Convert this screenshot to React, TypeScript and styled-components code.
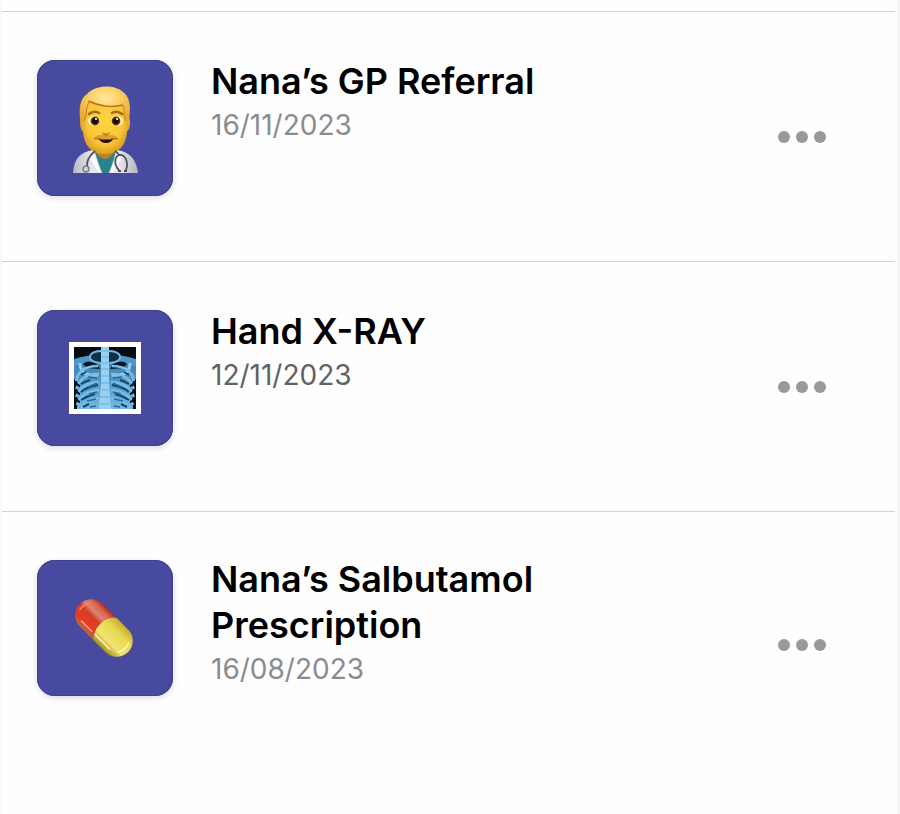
import React from 'react';
import styled, { createGlobalStyle } from 'styled-components';

const GlobalStyle = createGlobalStyle`
  * { box-sizing: border-box; }
  body { margin: 0; background: #fff; font-family: Inter, Roboto, sans-serif; color: #000; }
`;

const Page = styled.main`
  min-height: 100vh;
  padding-top: 11px;
  border-left: 2px solid #f8f8f8;
  border-right: 3px solid #f5f5f5;
  background: #fefefe;
`;

const List = styled.ul`
  list-style: none;
  margin: 0 2px 0 0;
  padding: 0;
`;

const Row = styled.li<{ $tall?: boolean }>`
  display: flex;
  align-items: flex-start;
  min-height: ${(p) => (p.$tall ? 266 : 250)}px;
  padding: 48px 69px 48px 35px;
  border-top: 1px solid #d3d3d3;
`;

const Tile = styled.div`
  flex: none;
  display: grid;
  place-items: center;
  width: 136px;
  height: 136px;
  border-radius: 18px;
  background: #484a9f;
  box-shadow: 0 2px 6px rgba(0, 0, 0, 0.14), inset 0 0 0 1px #3f4090;
`;

const Details = styled.div<{ $raised?: boolean }>`
  flex: 1;
  min-width: 0;
  max-width: 390px;
  padding-left: 38px;
  margin-top: ${(p) => (p.$raised ? -4 : -2)}px;
`;

const Title = styled.h2`
  margin: 0;
  font-size: 36px;
  line-height: 46px;
  font-weight: 600;
`;

const DateText = styled.time<{ $dark?: boolean }>`
  display: block;
  font-size: 28px;
  line-height: 42px;
  color: ${(p) => (p.$dark ? '#626264' : '#8c8c90')};
`;

const MoreButton = styled.button`
  align-self: center;
  display: flex;
  gap: 6px;
  margin-left: auto;
  padding: 0;
  border: 0;
  background: none;
  cursor: pointer;
`;

const Dot = styled.span`
  width: 12px;
  height: 12px;
  border-radius: 50%;
  background: #999;
`;

function DoctorIcon() {
  return (
    <svg width="72" height="90" viewBox="0 0 72 90" aria-hidden="true">
      <defs>
        <radialGradient id="face" cx=".5" cy=".42" r=".64">
          <stop offset="0" stopColor="#fed53f" />
          <stop offset=".65" stopColor="#f8c636" />
          <stop offset="1" stopColor="#cf9320" />
        </radialGradient>
        <radialGradient id="hair" cx=".5" cy=".3" r=".6">
          <stop offset="0" stopColor="#ffe9a0" />
          <stop offset=".45" stopColor="#fdd36a" />
          <stop offset="1" stopColor="#e9ab35" />
        </radialGradient>
        <linearGradient id="coat" x1="0" x2="1">
          <stop offset="0" stopColor="#b9bac2" />
          <stop offset=".3" stopColor="#e9e9ed" />
          <stop offset=".7" stopColor="#e9e9ed" />
          <stop offset="1" stopColor="#b3b4bd" />
        </linearGradient>
      </defs>
      <path d="M4 90C5 76 11 69 24 67h24c13 2 19 9 21 23Z" fill="url(#coat)" />
      <path d="M26 67h21l2 8-7 15H31l-6-16Z" fill="#28828f" />
      <path d="M27 63v6c2 4 6 7 9 7s7-3 9-7v-6Z" fill="#bd8220" />
      <path d="M25 67c2 6 4 13 8 23h-4l-9-15Zm22 0c-1 7-3 13-7 23h5l8-14Z" fill="#fafafc" stroke="#cbcbd2" strokeWidth=".5" />
      <path d="M15 34c-5-3-5 14 0 15Zm42 0c6-3 5 14 0 15Z" fill="#e5aa2c" />
      <path d="M14 24c0-15 44-15 44 0v22c0 17-9 25-22 25S14 63 14 46Z" fill="url(#face)" />
      <path d="M12 42C9 25 11 16 18 11c10-10 28-9 36-2 7 5 9 15 5 33l-3-9c0-5-1-7-2-11-12 3-25 1-34-3-1 4-2 9-2 13 0 4-3 7-6 10Z" fill="url(#hair)" />
      <path d="M20 18c9 5 22 7 34 4" fill="none" stroke="#b87621" strokeWidth="1.5" />
      <path d="M20 18q-3 7-3 14l-2 6M54 22q2 5 1 10l2 6" fill="none" stroke="#c48425" strokeWidth="1" />
      <path d="M20 31q5-4 10-1M43 30q5-3 10 1" fill="none" stroke="#a56a1c" strokeWidth="2.6" strokeLinecap="round" />
      <ellipse cx="25" cy="38" rx="6" ry="5" fill="#fff1bd" />
      <ellipse cx="48" cy="38" rx="6" ry="5" fill="#fff1bd" />
      <circle cx="26" cy="38" r="4.4" fill="#5b3010" />
      <circle cx="47" cy="38" r="4.4" fill="#5b3010" />
      <circle cx="26" cy="38" r="2.7" fill="#160b05" />
      <circle cx="47" cy="38" r="2.7" fill="#160b05" />
      <circle cx="27" cy="36" r="1.1" fill="#fff" />
      <circle cx="48" cy="36" r="1.1" fill="#fff" />
      <path d="M33 49q4 3 8 0-1 4-4 4t-4-4Z" fill="#c17d1b" />
      <path d="M25 56c1-4 7-5 12-3 5-2 11-1 12 3-6 2-18 2-24 0Z" fill="#dba02b" />
      <path d="M25 56q4-1 7 0m10 0q4-1 7 0" fill="none" stroke="#a96919" strokeWidth="1.2" />
      <path d="M30 56q7 1 14 0-2 4-7 4t-7-4Z" fill="#261006" />
      <path d="M26 68c-7 6-8 10-8 15M46 68c3 2 4 4 4 5" fill="none" stroke="#4a535b" strokeWidth="1.8" />
      <path d="M50 87c-5-5-5-13 0-15 6-1 10 7 7 15" fill="none" stroke="#4a535b" strokeWidth="1.8" />
      <circle cx="17" cy="86" r="3" fill="#ccd0d5" stroke="#777f86" strokeWidth="1.4" />
      <path d="M49 88h3m3 0h3" stroke="#454b50" strokeWidth="2" />
    </svg>
  );
}

function RibSide() {
  return (
    <g>
      <path d="M15 23q4-5 14 0l3 5-13-1Z" fill="#06121b" />
      <path d="M12 22c0 9 5 13 18 12" fill="none" stroke="#94cdf0" strokeWidth="3" />
      <path d="M30 25C18 25 9 29 8 42M31 33C19 33 10 38 8 50M31 41C20 42 11 45 8 57M31 49C21 50 12 54 9 64M31 57C22 58 15 62 12 69" fill="none" stroke="#79bde8" strokeWidth="2.4" />
      <path d="m13 34 5-3m-5 12q5-3 9-4m-9 12q6-5 17-7m-17 15q6-4 14-6m-12 13 6-3" fill="none" stroke="#174766" strokeWidth="2" />
      <path d="m20 36 9 1m-8 9 8-4m-8 11 8-2m-10 9 9-2m-6 8 6-1" fill="none" stroke="#286a94" strokeWidth="1.6" />
      <path d="M8 40q0 4 4 5M8 48q0 4 4 5M8 56q0 4 4 5" fill="none" stroke="#040e16" strokeWidth="2" />
    </g>
  );
}

function XRayIcon() {
  return (
    <svg width="74" height="74" viewBox="0 0 74 74" aria-hidden="true">
      <defs>
        <clipPath id="film"><path d="M6 6h62v62H6Z" /></clipPath>
        <linearGradient id="lung" x1="0" y1="0" x2="0" y2="1">
          <stop stopColor="#357aa8" />
          <stop offset="1" stopColor="#72b8e2" />
        </linearGradient>
      </defs>
      <path d="M1 1h72v72H1Z" fill="#fff" />
      <g clipPath="url(#film)">
        <path d="M6 6h62v62H6Z" fill="#050d13" />
        <path d="m6 20 20-6h22l20 6v17l-4 8 1 23H9l1-23-4-8Z" fill="url(#lung)" />
        <path d="M6 18q14-4 22-4l4 5-16 3-10 3Zm62 0q-14-4-22-4l-4 5 16 3 10 3Z" fill="#4b98c9" />
        <path d="M34 10c-13 0-16 8-7 11l10 2 10-2c9-3 6-11-7-11" fill="#102f45" stroke="#71b9e3" strokeWidth="2" />
        <RibSide />
        <g transform="translate(74 0) scale(-1 1)"><RibSide /></g>
        <path d="M34 29 31 68h12l-3-39Z" fill="#9bd2f4" />
        <path d="M33 6h8v62h-8Z" fill="#98d0f3" />
        <path d="M33 10h8M33 16h8M33 22h8M33 28h8M33 35h8M33 42h8M33 49h8M32 56h10M32 63h10" stroke="#65afd9" strokeWidth="1.2" />
      </g>
    </svg>
  );
}

function PillIcon() {
  return (
    <svg width="60" height="60" viewBox="0 0 60 60" aria-hidden="true">
      <defs>
        <linearGradient id="red" x1="0" y1="0" x2="0" y2="1">
          <stop stopColor="#b52a1f" />
          <stop offset=".15" stopColor="#d9634f" />
          <stop offset=".35" stopColor="#d98676" />
          <stop offset=".5" stopColor="#d53e2a" />
          <stop offset=".8" stopColor="#e63b22" />
          <stop offset="1" stopColor="#b66a50" />
        </linearGradient>
        <linearGradient id="yellow" x1="0" y1="0" x2="0" y2="1">
          <stop stopColor="#c6ae30" />
          <stop offset=".3" stopColor="#e9d951" />
          <stop offset=".7" stopColor="#f1e372" />
          <stop offset="1" stopColor="#a99120" />
        </linearGradient>
      </defs>
      <g transform="translate(29 30) rotate(45)">
        <path d="M6-16h-24a16 16 0 0 0 0 32H6Z" fill="url(#red)" />
        <path d="M2-16h16a16 16 0 0 1 0 32H2C-8 9-8-9 2-16Z" fill="url(#yellow)" />
        <path d="M-21 11H-6" stroke="#f9a28d" strokeWidth="1.5" strokeLinecap="round" />
        <path d="M-2 11h21M28-7q3 8-1 14" fill="none" stroke="#fff6bc" strokeWidth="1.4" strokeLinecap="round" />
        <path d="M-28-8q-3 6-2 12" fill="none" stroke="#f58370" strokeWidth="1.5" strokeLinecap="round" />
      </g>
    </svg>
  );
}

const records = [
  { title: 'Nana’s GP Referral', date: '16/11/2023', iso: '2023-11-16', Icon: DoctorIcon },
  { title: 'Hand X-RAY', date: '12/11/2023', iso: '2023-11-12', Icon: XRayIcon, dark: true },
  { title: 'Nana’s Salbutamol Prescription', date: '16/08/2023', iso: '2023-08-16', Icon: PillIcon, tall: true },
];

export default function App() {
  return (
    <Page>
      <GlobalStyle />
      <List>
        {records.map(({ title, date, iso, Icon, dark, tall }) => (
          <Row key={title} $tall={tall}>
            <Tile><Icon /></Tile>
            <Details $raised={tall}>
              <Title>{title}</Title>
              <DateText dateTime={iso} $dark={dark}>{date}</DateText>
            </Details>
            <MoreButton type="button" aria-label={`More options for ${title}`}>
              <Dot /><Dot /><Dot />
            </MoreButton>
          </Row>
        ))}
      </List>
    </Page>
  );
}
